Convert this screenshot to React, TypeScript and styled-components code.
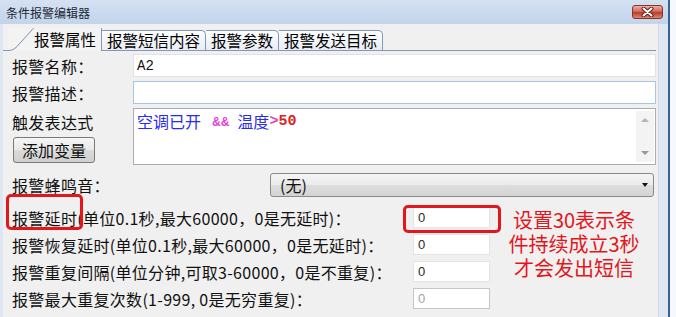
import styled, { createGlobalStyle } from "styled-components";

const GlobalStyle = createGlobalStyle`
  html, body {
    margin: 0;
    padding: 0;
  }

  body {
    width: 676px;
    height: 317px;
    overflow: hidden;
    background: #f5f8fc;
    font-family: "Noto Sans CJK SC", "Liberation Sans", sans-serif;
  }
`;

const RED = "#e3161c";

const numberRows = [
  { label: "报警恢复延时(单位0.1秒,最大60000，0是无延时)：", value: "0" },
  { label: "报警重复间隔(单位分钟,可取3-60000，0是不重复)：", value: "0" },
  { label: "报警最大重复次数(1-999, 0是无穷重复)：", value: "0", disabled: true },
];

const tabs = ["报警短信内容", "报警参数", "报警发送目标"];

const App = () => {
  return (
    <>
      <GlobalStyle />
      <Window>
        <TitleBar>
          <Title>条件报警编辑器</Title>
          <CloseButton>
            <svg width="13" height="10" viewBox="0 0 13 10">
              <path d="M2.5 1.5 L10.5 8.5 M10.5 1.5 L2.5 8.5" stroke="#5a1d18" strokeWidth="4" strokeLinecap="round" />
              <path d="M2.5 1.5 L10.5 8.5 M10.5 1.5 L2.5 8.5" stroke="#fff" strokeWidth="2" strokeLinecap="round" />
            </svg>
          </CloseButton>
        </TitleBar>

        <Frame>
          <Panel>
            <TabStrip>
              <ActiveTab>
                <svg width="26" height="23" viewBox="0 0 26 23">
                  <path d="M0 22.5 C4 22.5 6 21.5 9 18.5 L23 3 C24.5 1.3 25 0.5 26 0.5" fill="none" stroke="#7d90ae" strokeWidth="1" />
                </svg>
                报警属性
              </ActiveTab>
              {tabs.map((tab) => (
                <Tab key={tab}>{tab}</Tab>
              ))}
            </TabStrip>

            <Form>
              <TopGrid>
                <Label>报警名称：</Label>
                <TextBox>A2</TextBox>

                <Label>报警描述：</Label>
                <TextBox $focused />

                <ExprSide>
                  <Label>触发表达式</Label>
                  <Button>添加变量</Button>
                </ExprSide>
                <ExprBox>
                  <ExprText>
                    <Var>空调已开</Var>
                    <Op>&amp;&amp;</Op>
                    <Var>温度</Var>
                    <Cmp>&gt;</Cmp>
                    <Num>50</Num>
                  </ExprText>
                  <ScrollBar>
                    <Arrow $up />
                    <Arrow />
                  </ScrollBar>
                </ExprBox>
              </TopGrid>

              <BeepRow>
                <Label>报警蜂鸣音：</Label>
                <Select>
                  <span>(无)</span>
                  <Caret />
                </Select>
              </BeepRow>

              <NumberGrid>
                <Label>
                  <Marked>报警延时</Marked>(单位0.1秒,最大60000，0是无延时)：
                </Label>
                <NumberBox $marked>0</NumberBox>
                <Note>
                  <NoteLine>设置30表示条</NoteLine>
                  <NoteLine>件持续成立3秒</NoteLine>
                  <NoteLine>才会发出短信</NoteLine>
                </Note>

                {numberRows.map((row) => (
                  <NumberRow key={row.label}>
                    <Label>{row.label}</Label>
                    <NumberBox $disabled={row.disabled}>{row.value}</NumberBox>
                  </NumberRow>
                ))}

                <Label>报警时触发控制命令</Label>
              </NumberGrid>
            </Form>
          </Panel>
        </Frame>
      </Window>
    </>
  );
};

const Window = styled.div`
  width: 668px;
  height: 317px;
  border-right: 2px solid #3a6296;
  display: flex;
  flex-direction: column;
  overflow: hidden;
`;

const TitleBar = styled.div`
  flex: none;
  height: 24px;
  padding: 0 5px 0 6px;
  display: flex;
  align-items: center;
  justify-content: space-between;
  background: linear-gradient(#d4e1f1, #c3d5eb);
`;

const Title = styled.span`
  font-size: 12px;
  color: #1d2836;
`;

const CloseButton = styled.div`
  width: 29px;
  height: 12px;
  border: 1px solid #87362f;
  border-radius: 3px;
  display: flex;
  align-items: center;
  justify-content: center;
  background: linear-gradient(#eab1a4, #d26a5a 45%, #bd3b2d 55%, #dc8870);
`;

const Frame = styled.div`
  flex: 1;
  display: flex;
  padding: 0 9px 0 3px;
  background: #dfe8f2;
`;

const Panel = styled.div`
  flex: 1;
  display: flex;
  flex-direction: column;
  background: #f0f0f0;
  border-right: 1px solid #d2d8e0;
`;

const TabStrip = styled.div`
  flex: none;
  height: 26px;
  margin-right: 2px;
  padding-left: 5px;
  display: flex;
  align-items: flex-end;
  border-bottom: 1px solid #8497b5;
`;

const ActiveTab = styled.div`
  height: 23px;
  margin-bottom: -1px;
  padding-right: 5px;
  display: flex;
  align-items: flex-start;
  background: #f3f3f3;
  border-right: 1px solid #8497b5;
  font-size: 15.5px;
  line-height: 22px;
  color: #000;

  svg {
    flex: none;
  }
`;

const Tab = styled.div`
  height: 19px;
  padding: 0 5px;
  border: 1px solid #8497b5;
  border-left: none;
  border-bottom: none;
  border-top-right-radius: 5px;
  background: linear-gradient(#fcfdfe, #e8edf5);
  font-size: 15.5px;
  line-height: 19px;
  color: #000;
`;

const Form = styled.div`
  padding: 3px 2px 0 9px;
  display: flex;
  flex-direction: column;
`;

const TopGrid = styled.div`
  display: grid;
  grid-template-columns: 121px 1fr;
  row-gap: 4px;
`;

const Label = styled.div`
  display: flex;
  align-items: center;
  white-space: nowrap;
  font-size: 16px;
  line-height: 20px;
  letter-spacing: 0.3px;
  color: #111;
`;

const TextBox = styled.div<{ $focused?: boolean }>`
  height: 23px;
  box-sizing: border-box;
  padding: 0 3px;
  display: flex;
  align-items: center;
  background: #fff;
  border: 1px solid ${(p) => (p.$focused ? "#a6c6e6" : "#dfe2e6")};
  font-family: "Liberation Mono", monospace;
  font-size: 14px;
  color: #111;
`;

const ExprSide = styled.div`
  padding-top: 4px;
  display: flex;
  flex-direction: column;
  align-items: flex-start;
  gap: 5px;
`;

const Button = styled.div`
  width: 82px;
  height: 26px;
  margin-left: 1px;
  box-sizing: border-box;
  display: flex;
  align-items: center;
  justify-content: center;
  border: 1px solid #7a7a7a;
  border-radius: 3px;
  background: linear-gradient(#f5f5f5, #e9e9e9 48%, #dadada 52%, #cfcfcf);
  font-size: 16px;
  color: #111;
`;

const ExprBox = styled.div`
  height: 57px;
  box-sizing: border-box;
  display: flex;
  background: #fff;
  border: 1px solid #a9acb2;
`;

const ExprText = styled.div`
  flex: 1;
  height: 20px;
  padding: 2px 3px;
  display: flex;
  align-items: center;
  align-self: flex-start;
  font-size: 16px;
`;

const Var = styled.span`
  color: #2b2bf0;
`;

const Op = styled.span`
  margin: 2px 8px 0 11px;
  font-family: "Liberation Sans", sans-serif;
  font-weight: bold;
  font-size: 12px;
  color: #e83ce0;
`;

const Cmp = styled.span`
  font-family: "Liberation Mono", monospace;
  font-weight: bold;
  font-size: 15px;
  color: #e03cc8;
`;

const Num = styled.span`
  font-family: "Liberation Mono", monospace;
  font-weight: bold;
  font-size: 15px;
  color: #d82424;
`;

const ScrollBar = styled.div`
  width: 18px;
  margin: 2px 1px 2px 0;
  padding: 7px 0;
  box-sizing: border-box;
  display: flex;
  flex-direction: column;
  align-items: center;
  justify-content: space-between;
  background: #f3f3f3;
`;

const Arrow = styled.div<{ $up?: boolean }>`
  width: 0;
  height: 0;
  border-left: 4px solid transparent;
  border-right: 4px solid transparent;
  ${(p) => (p.$up ? "border-bottom: 4px solid #b4b4b4;" : "border-top: 4px solid #9a9a9a;")}
`;

const BeepRow = styled.div`
  margin-top: 8px;
  margin-right: 2px;
  display: grid;
  grid-template-columns: 258px 1fr;
`;

const Select = styled.div`
  height: 24px;
  box-sizing: border-box;
  padding: 0 5px 0 9px;
  display: flex;
  align-items: center;
  justify-content: space-between;
  border: 1px solid #8a8a8a;
  border-radius: 3px;
  background: linear-gradient(#f4f4f4, #ebebeb 48%, #dddddd 52%, #d4d4d4);
  font-size: 16px;
  color: #111;
`;

const Caret = styled.div`
  width: 0;
  height: 0;
  border-left: 3.5px solid transparent;
  border-right: 3.5px solid transparent;
  border-top: 4px solid #111;
`;

const NumberGrid = styled.div`
  margin-top: 7px;
  display: grid;
  grid-template-columns: 401px 77px 1fr;
  grid-auto-rows: 27px;

  ${Label} {
    grid-column: 1;
  }
`;

const NumberRow = styled.div`
  display: contents;
`;

const NumberBox = styled.div<{ $disabled?: boolean; $marked?: boolean }>`
  position: relative;
  grid-column: 2;
  align-self: center;
  height: 21px;
  box-sizing: border-box;
  padding-left: 4px;
  display: flex;
  align-items: center;
  background: #fff;
  border: 1px solid ${(p) => (p.$disabled ? "#c6c6c6" : "#e4e4e4")};
  font-family: "Liberation Sans", sans-serif;
  font-size: 13px;
  color: ${(p) => (p.$disabled ? "#a3a3a3" : "#2a2a2a")};

  ${(p) =>
    p.$marked &&
    `
    &::after {
      content: "";
      position: absolute;
      left: -11px;
      top: -3px;
      width: 98px;
      height: 28px;
      box-sizing: border-box;
      border: 3px solid ${RED};
      border-radius: 5px;
    }
  `}
`;

const Marked = styled.span`
  position: relative;
  display: inline-block;
  line-height: 20px;

  &::after {
    content: "";
    position: absolute;
    left: -6px;
    top: -14px;
    width: 77px;
    height: 36px;
    box-sizing: border-box;
    border: 3px solid ${RED};
    border-radius: 5px;
  }
`;

const Note = styled.div`
  grid-row: 1 / span 3;
  grid-column: 3;
  width: 142px;
  margin: 4px 0 0 13px;
  display: flex;
  flex-direction: column;
  align-items: center;
`;

const NoteLine = styled.div`
  height: 24px;
  font-size: 20px;
  line-height: 24px;
  color: ${RED};
  white-space: nowrap;
`;

export default App;
